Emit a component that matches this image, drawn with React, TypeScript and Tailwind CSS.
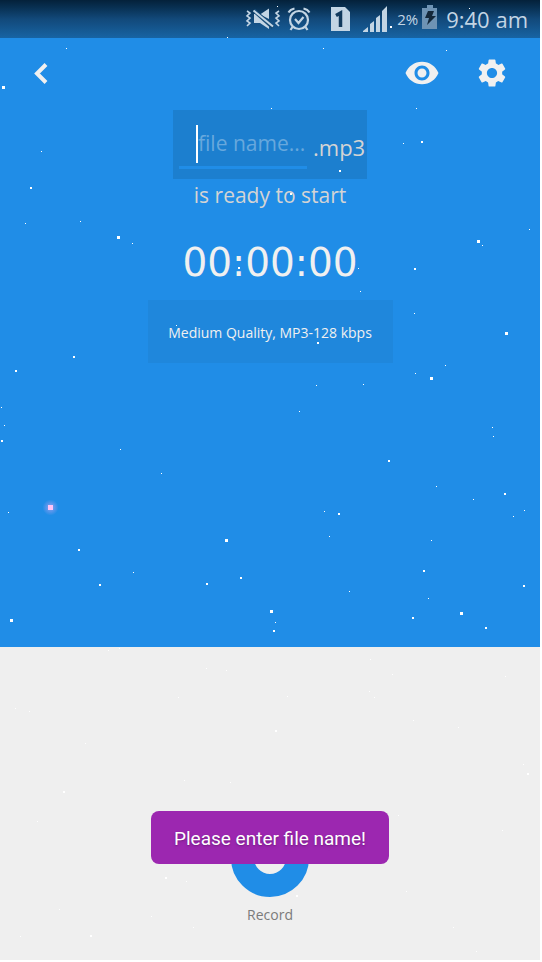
import React from "react";
import { MdRemoveRedEye, MdSettings } from "react-icons/md";

// x, y, size
const stars: [number, number, number][] = [
  [227, 37, 1], [277, 6, 1], [469, 8, 1], [390, 26, 2], [66, 48, 1], [2, 86, 3], [41, 151, 1],
  [30, 187, 2], [25, 223, 1], [80, 221, 1], [117, 236, 3], [132, 243, 1], [238, 267, 2],
  [323, 48, 1], [446, 50, 1], [271, 108, 1], [416, 108, 1], [403, 143, 1], [421, 141, 2],
  [339, 170, 2], [290, 193, 2], [529, 229, 1], [477, 240, 3], [482, 245, 1], [414, 268, 2],
  [358, 268, 1], [360, 291, 1], [176, 325, 1], [317, 342, 2], [414, 313, 1], [505, 332, 3],
  [73, 356, 2], [15, 370, 2], [1, 407, 1], [4, 425, 1], [1, 440, 2], [120, 449, 1],
  [161, 473, 1], [8, 512, 1], [225, 539, 3], [78, 549, 2], [133, 572, 1], [99, 584, 2],
  [206, 583, 2], [240, 577, 2], [10, 619, 3],
  [445, 365, 1], [415, 373, 1], [430, 377, 3], [316, 385, 1], [363, 384, 1], [299, 411, 1],
  [492, 427, 1], [493, 436, 1], [388, 460, 2], [436, 486, 1], [504, 493, 2], [473, 499, 1],
  [324, 511, 1], [338, 513, 2], [524, 510, 1], [513, 516, 1], [329, 536, 1], [431, 540, 1],
  [423, 570, 2], [523, 585, 2], [349, 591, 1], [428, 598, 1], [412, 617, 2], [460, 612, 3],
  [485, 627, 2], [270, 610, 3], [275, 622, 1], [273, 630, 2], [108, 650, 1], [119, 648, 1],
  [206, 668, 1], [226, 670, 1], [178, 697, 1], [287, 696, 1], [369, 691, 1], [374, 697, 1],
  [370, 659, 1], [392, 674, 1], [505, 676, 1], [413, 720, 1], [458, 727, 1], [15, 708, 1],
  [29, 711, 1], [275, 730, 2], [85, 743, 1], [523, 764, 1], [527, 773, 2], [184, 780, 1],
  [230, 782, 1], [63, 791, 2], [37, 821, 1], [398, 815, 1], [502, 830, 1], [165, 877, 2],
  [186, 881, 1], [406, 891, 1], [296, 895, 2], [59, 909, 1], [151, 916, 1], [193, 927, 1],
  [20, 936, 1], [90, 935, 2], [453, 927, 1], [476, 951, 1],
];

function StarField() {
  return (
    <svg className="pointer-events-none absolute inset-0 h-full w-full" aria-hidden="true">
      <defs>
        <radialGradient id="glow">
          <stop offset="0.3" stopColor="#8f9ff0" stopOpacity="0.7" />
          <stop offset="1" stopColor="#8f9ff0" stopOpacity="0" />
        </radialGradient>
      </defs>
      {stars.map(([x, y, s], i) => (
        <rect key={i} x={x} y={y} width={s} height={s} fill="#fff" />
      ))}
      <circle cx="50.5" cy="507.5" r="8" fill="url(#glow)" />
      <rect x="48" y="505" width="5" height="5" fill="#ffc4f6" />
    </svg>
  );
}

function StatusBar() {
  return (
    <div className="flex h-[38px] items-center bg-linear-to-b from-[#04213a] via-[#12497a] to-[#1764a4] pr-3 text-[#c3d5e4]">
      <svg className="ml-auto" width="36" height="24" viewBox="0 0 36 24" fill="none" aria-label="Vibrate, muted">
        <g stroke="currentColor" strokeWidth="1.6">
          <path d="M2 4l3 2-3 3 3 2-3 3 3 2-3 3" />
          <path d="M34 4l-3 2 3 3-3 2 3 3-3 2 3 3" />
        </g>
        <path fill="currentColor" d="M15 7.500L24 1.500V12zM9 7h2l13 10v5l-9-6H9z" />
        <path d="M9 3.500L28 20.500" stroke="#164b77" strokeWidth="4" />
        <path d="M8.500 3.500L28 19.500" stroke="currentColor" strokeWidth="2" />
      </svg>
      <svg className="ml-1.5" width="24" height="26" viewBox="0 0 24 26" fill="none" stroke="currentColor" strokeWidth="2.200" aria-label="Alarm">
        <circle cx="12" cy="14" r="9" />
        <path d="M1.500 6.500C3 4 5 3 7.500 2.500M22.500 6.500C21 4 19 3 16.500 2.500M5.500 21l-2 3M18.500 21l2 3M8 13l3.500 4L16.500 11" />
      </svg>
      <svg className="ml-5" width="20" height="24" viewBox="0 0 20 24" aria-label="SIM 1">
        <path fill="currentColor" d="M0 0h14l5 5v19H0z" />
        <path d="M5 8.500L9.500 6v14" fill="none" stroke="#123a5d" strokeWidth="3.500" />
      </svg>
      <svg className="ml-3" width="26" height="26" viewBox="0 0 26 26" fill="currentColor" aria-label="Signal">
        <path d="M0 26v-1l5-4v5zM7 18l4-3v11H7zM13 12l4-3v17h-4zM19 5l5-5v26h-5z" />
      </svg>
      <span className="ml-2 font-['Open_Sans',sans-serif] text-[15px] leading-5">2%</span>
      <svg className="mb-1 ml-1" width="16" height="24" viewBox="0 0 16 24" aria-label="Battery charging">
        <path fill="#6e93b4" d="M5 0h6v3h4v21H0V3h5z" />
        <path fill="#14283a" d="M6 6h6l-2 5h4L5 20l2-7H3z" />
      </svg>
      <span className="ml-2 font-['Open_Sans',sans-serif] text-[22px] leading-6">9:40 am</span>
    </div>
  );
}

export default function App() {
  return (
    <div className="min-h-screen bg-white pr-0.5 pb-0.5 font-['Open_Sans',sans-serif]">
      <main className="relative flex min-h-[calc(100vh-2px)] flex-col overflow-hidden bg-[#efefef]">
        <StatusBar />

        <section className="flex flex-1 flex-col items-center bg-[#208de7] text-[#f0f0f0]">
          <header className="flex h-[70px] w-full items-center pr-[31px] pl-[22px]">
            <button type="button" aria-label="Back">
              <svg width="38" height="38" viewBox="0 0 38 38" fill="none" stroke="currentColor" strokeWidth="4">
                <path d="M24 10.500L15 19.500l9 9" />
              </svg>
            </button>
            <button type="button" aria-label="Preview" className="ml-auto">
              <MdRemoveRedEye size={36} />
            </button>
            <button type="button" aria-label="Settings" className="ml-[35px]">
              <MdSettings size={34} />
            </button>
          </header>

          <div className="mt-0.5 flex h-[69px] w-[194px] gap-1.5 bg-[#1c7fcf] pt-[15px] pl-1.5">
            <div className="flex h-11 w-32 shrink-0 border-b-[3px] border-[#208de7] pb-[3px] pl-[17px]">
              <span className="w-0.5 shrink-0 bg-white" />
              <input
                type="text"
                aria-label="File name"
                placeholder="file name..."
                className="w-full min-w-0 bg-transparent text-[21px] outline-none placeholder:text-[#67a8dd]"
              />
            </div>
            <span className="text-[22px] leading-[44px] text-[#d4d4d4]">.mp3</span>
          </div>
          <p className="text-[21px] leading-8 text-[#d4d4d4]">is ready to start</p>

          <time className="mt-6 font-['DejaVu_Sans',sans-serif] text-[39px] leading-[56px]">00:00:00</time>

          <button
            type="button"
            className="mt-[9px] h-[63px] w-[245px] bg-[#1f87dc] pt-0.5 text-sm whitespace-nowrap"
          >
            Medium Quality, MP3-128 kbps
          </button>
        </section>

        <section className="flex h-[313px] flex-col items-center justify-end pb-[35px]">
          <button type="button" className="flex flex-col items-center gap-2 text-sm leading-5 text-[#7b7b7b]">
            <span className="h-[78px] w-[78px] rounded-full border-[23px] border-[#208de7]" />
            Record
          </button>
        </section>

        <StarField />

        <div className="pointer-events-none absolute inset-x-0 bottom-24 flex justify-center">
          <div
            role="status"
            className="flex h-[53px] w-[238px] items-center justify-center rounded-lg bg-[#9c27b0] pt-1 font-['Roboto',sans-serif] text-[19px] whitespace-nowrap text-white text-shadow-md"
          >
            Please enter file name!
          </div>
        </div>
      </main>
    </div>
  );
}
